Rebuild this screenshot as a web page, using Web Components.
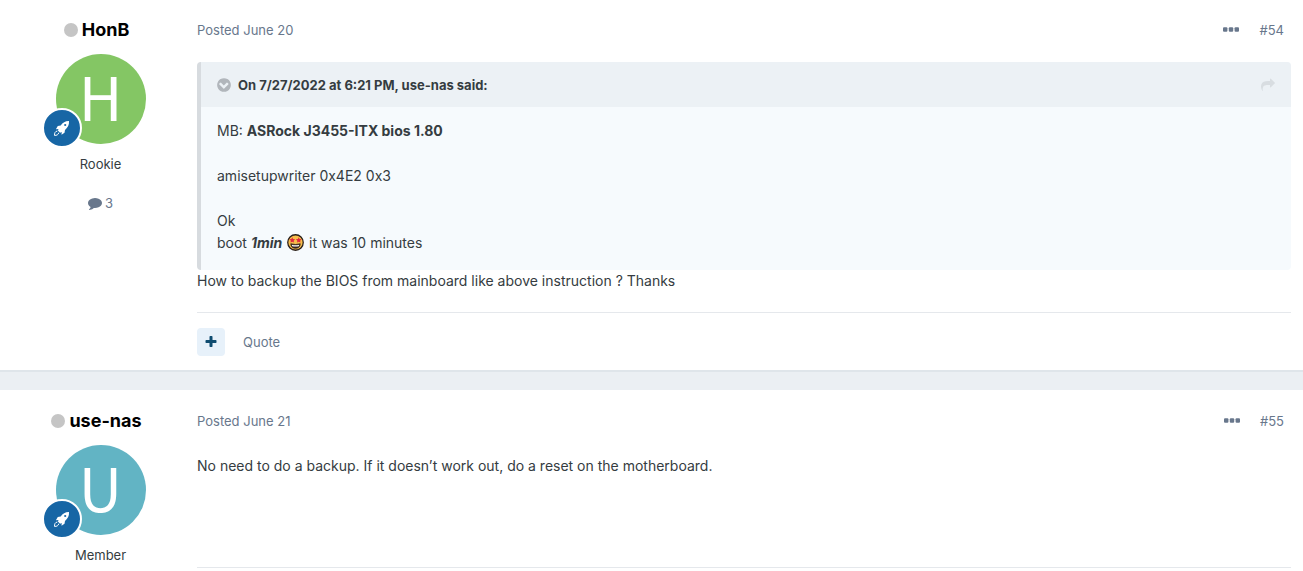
<!DOCTYPE html>
<html lang="en">
<head>
<meta charset="utf-8">
<meta name="viewport" content="width=device-width, initial-scale=1">
<title>Topic replies</title>
<style>
body { margin: 0; background: #ebeff3; color: #353c41; font: 14px/22px Inter, "Liberation Sans", sans-serif; }
</style>
</head>
<body>
<topic-feed>
  <forum-post number="54" posted="June 20" actions>
    <author-panel slot="author" name="HonB" rank="Rookie" posts="3" color="#84c664"></author-panel>
    <quote-block cite="On 7/27/2022 at 6:21 PM, use-nas said:">
      <p>MB: <strong>ASRock J3455-ITX bios 1.80</strong></p>
      <p>amisetupwriter 0x4E2 0x3</p>
      <p>Ok<br>boot <strong><em>1min</em></strong> <star-emoji></star-emoji> it was 10 minutes</p>
    </quote-block>
    <div>How to backup the BIOS from mainboard like above instruction ? Thanks</div>
  </forum-post>
  <forum-post number="55" posted="June 21">
    <author-panel slot="author" name="use-nas" rank="Member" color="#62b4c4"></author-panel>
    <div>No need to do a backup. If it doesn’t work out, do a reset on the motherboard.</div>
  </forum-post>
</topic-feed>

<script>
const ICONS = {
  comment: '<path d="M1792 896q0 174-120 321.5t-326 233-450 85.5q-70 0-145-8-198 175-460 242-49 14-114 22-17 2-30.5-9t-17.5-29v-1q-3-4-.5-12t2-10 4.5-9.5l6-9 7-8.5 8-9q7-8 31-34.5t34.5-38 31-39.5 32.5-51 27-59 26-76q-157-89-247.5-220t-90.5-281q0-130 71-248.5t191-204.5 286-136.5 348-50.5q244 0 450 85.5t326 233 120 321.5z"/>',
  share: '<path d="M1792 640q0 26-19 45l-512 512q-19 19-45 19t-45-19-19-45v-256h-224q-98 0-175.5 6t-154 21.5-133 42.5-105.5 69.5-80 101-48.5 138.5-17.5 181q0 55 5 123 0 6 2.5 23.5t2.5 26.5q0 15-8.5 25t-23.5 10q-16 0-28-17-7-9-13-22t-13.5-30-10.5-24q-127-285-127-451 0-199 53-333 162-403 875-403h224v-256q0-26 19-45t45-19 45 19l512 512q19 19 19 45z"/>',
  chevron: '<path d="M922 1283l454-454q19-19 19-45t-19-45l-102-102q-19-19-45-19t-45 19l-307 307-307-307q-19-19-45-19t-45 19l-102 102q-19 19-19 45t19 45l454 454q19 19 45 19t45-19zm742-387q0 209-103 385.5t-279.5 279.5-385.5 103-385.5-103-279.5-279.5-103-385.5 103-385.5 279.5-279.5 385.5-103 385.5 103 279.5 279.5 103 385.5z"/>',
  plus: '<path d="M1600 736v192q0 40-28 68t-68 28h-416v416q0 40-28 68t-68 28h-192q-40 0-68-28t-28-68v-416h-416q-40 0-68-28t-28-68v-192q0-40 28-68t68-28h416v-416q0-40 28-68t68-28h192q40 0 68 28t28 68v416h416q40 0 68 28t28 68z"/>',
  dots: '<rect x="0" y="590" width="496" height="496" rx="120"/><rect x="648" y="590" width="496" height="496" rx="120"/><rect x="1296" y="590" width="496" height="496" rx="120"/>'
};

class FaIcon extends HTMLElement {
  constructor() { super(); this.attachShadow({ mode: 'open' }); }
  connectedCallback() {
    this.shadowRoot.innerHTML = `
      <style>
        :host { display: inline-block; width: var(--icon-size, 14px); height: var(--icon-size, 14px); }
        svg { display: block; width: 100%; height: 100%; fill: currentColor; }
      </style>
      <svg viewBox="0 0 1792 1792" aria-hidden="true">${ICONS[this.getAttribute('name')]}</svg>`;
  }
}

class StarEmoji extends HTMLElement {
  constructor() {
    super();
    this.attachShadow({ mode: 'open' }).innerHTML = `
      <style>
        :host { display: inline-block; width: 17px; height: 17px; margin: 0 1px; vertical-align: -3px; }
        svg { display: block; width: 100%; height: 100%; }
      </style>
      <svg viewBox="0 0 34 34" role="img" aria-label="Star-struck face">
        <circle cx="17" cy="17" r="15.500" fill="#f8bd4b" stroke="#2b211c" stroke-width="2.600"/>
        <g fill="#e0293d">
          <path d="M10.500 6.500l1.700 3.600 4 .5-2.900 2.700.7 3.900-3.500-1.900-3.500 1.900.7-3.900-3-2.700 4-.5z"/>
          <path d="M23.500 6.500l1.700 3.600 4 .5-2.900 2.700.7 3.900-3.500-1.900-3.500 1.900.7-3.900-3-2.700 4-.5z"/>
        </g>
        <path d="M7.500 19.500q9.500 3 19 0-.8 9-9.500 9t-9.500-9z" fill="#3b2520" stroke="#2b211c" stroke-width="1.500"/>
        <path d="M9.500 21.500q7.500 2 15 0l-1 2.800q-6.500 1.400-13 0z" fill="#fff"/>
      </svg>`;
  }
}

class AuthorPanel extends HTMLElement {
  constructor() { super(); this.attachShadow({ mode: 'open' }); }
  connectedCallback() {
    const name = this.getAttribute('name');
    const posts = this.getAttribute('posts');
    this.shadowRoot.innerHTML = `
      <style>
        :host { display: flex; flex-direction: column; align-items: center; font-size: 13px; line-height: 20px; }
        h3 { display: flex; align-items: center; gap: 4px; margin: 0 0 12px; padding-right: 8px; font-size: 18px; line-height: 24px; font-weight: 700; color: #000; }
        a { color: inherit; text-decoration: none; }
        .status { width: 14px; height: 14px; border-radius: 50%; background: #c5c5c5; }
        .avatar { position: relative; width: 90px; height: 90px; margin-bottom: 10px; }
        .letter { display: block; height: 90px; border-radius: 50%; color: #fff; font: 400 60px/82px "Noto Sans CJK SC", sans-serif; text-align: center; }
        .badge { position: absolute; left: -14px; bottom: -4px; width: 36px; height: 36px; border: 2px solid #fff; border-radius: 50%; background: #1766a5; }
        .badge svg { display: block; width: 36px; height: 36px; }
        .posts { display: flex; align-items: center; gap: 3px; margin-top: 19px; color: #68778c; }
      </style>
      <h3><span class="status"></span><a href="#">${name}</a></h3>
      <div class="avatar">
        <a class="letter" href="#" style="background:${this.getAttribute('color')}">${name[0].toUpperCase()}</a>
        <span class="badge">
          <svg viewBox="0 0 36 36" role="img" aria-label="Rank badge">
            <path d="M25 11c-3.500-.1-6.300 1.400-8.300 4.600l-2.900.5-1.900 3.100 2.600-.3-.6 1.600 2.200 2.200 1.600-.6-.2 2.700 3-2 .5-2.900c2.800-2.200 4.300-5.200 4-8.900z" fill="#fff"/>
            <circle cx="21.200" cy="15" r="1.100" fill="#1766a5"/>
            <path d="M13.400 21c-2.300.2-3 2.300-2.900 4.400 2 .1 4-.6 4.200-2.700" fill="none" stroke="#fff" stroke-width="1"/>
          </svg>
        </span>
      </div>
      <div>${this.getAttribute('rank')}</div>
      ${posts ? `<div class="posts"><fa-icon name="comment"></fa-icon>${posts}</div>` : ''}`;
  }
}

class QuoteBlock extends HTMLElement {
  constructor() { super(); this.attachShadow({ mode: 'open' }); }
  connectedCallback() {
    this.shadowRoot.innerHTML = `
      <style>
        :host { display: block; border-left: 4px solid #d7dbdf; border-radius: 4px; overflow: hidden; background: #f6fafd; }
        header { display: flex; align-items: center; justify-content: space-between; height: 45px; padding: 0 16px 0 15px; background: #ecf1f5; font-size: 13px; font-weight: 700; }
        button { display: flex; align-items: center; gap: 6px; padding: 0; border: 0; background: none; font: inherit; color: inherit; }
        button fa-icon { --icon-size: 16px; color: #b1b6bb; }
        a { display: flex; color: #d8dde1; }
        .body { display: grid; gap: 23px; padding: 13px 16px 16px; }
        ::slotted(p) { margin: 0; }
      </style>
      <header>
        <button type="button"><fa-icon name="chevron"></fa-icon><span>${this.getAttribute('cite')}</span></button>
        <a href="#" aria-label="View original post"><fa-icon name="share"></fa-icon></a>
      </header>
      <div class="body"><slot></slot></div>`;
  }
}

class ForumPost extends HTMLElement {
  constructor() { super(); this.attachShadow({ mode: 'open' }); }
  connectedCallback() {
    this.shadowRoot.innerHTML = `
      <style>
        :host { display: grid; grid-template-columns: 177px minmax(0, 1fr); gap: 8px; padding: 18px 12px 14px; background: #fff; box-shadow: 0 2px 0 #dfe5ea; }
        :host(:last-child) { padding-top: 19px; padding-bottom: 0; }
        .meta { display: flex; align-items: center; gap: 20px; padding-right: 7px; margin-bottom: 20px; font-size: 13px; line-height: 24px; color: #68778c; }
        .meta a { color: inherit; text-decoration: none; }
        .posted { margin-right: auto; }
        button { display: grid; place-items: center; padding: 0; border: 0; background: none; color: inherit; font: inherit; }
        .menu { --icon-size: 16px; }
        .content { min-height: 94px; padding-bottom: 20px; }
        ::slotted(div:only-of-type:nth-child(2)) { padding-top: 2px; }
        footer { border-top: 1px solid #e5e8ec; }
        .actions { display: flex; align-items: center; gap: 18px; padding-top: 15px; font-size: 13px; color: #68778c; }
        .actions a { color: inherit; text-decoration: none; }
        .multi { width: 28px; height: 28px; border-radius: 4px; background: #e7f1fa; color: #0f4c70; }
      </style>
      <slot name="author"></slot>
      <article>
        <div class="meta">
          <a class="posted" href="#">Posted <time>${this.getAttribute('posted')}</time></a>
          <button class="menu" type="button" aria-label="More options"><fa-icon name="dots"></fa-icon></button>
          <a href="#">#${this.getAttribute('number')}</a>
        </div>
        <div class="content"><slot></slot></div>
        <footer>${this.hasAttribute('actions') ? `
          <div class="actions">
            <button class="multi" type="button" aria-label="Multi-quote"><fa-icon name="plus"></fa-icon></button>
            <a href="#">Quote</a>
          </div>` : ''}
        </footer>
      </article>`;
  }
}

class TopicFeed extends HTMLElement {
  constructor() {
    super();
    this.attachShadow({ mode: 'open' }).innerHTML = `
      <style>
        :host { display: grid; grid-template-rows: auto 1fr; gap: 20px; min-height: 100vh; }
      </style>
      <slot></slot>`;
  }
}

customElements.define('fa-icon', FaIcon);
customElements.define('star-emoji', StarEmoji);
customElements.define('author-panel', AuthorPanel);
customElements.define('quote-block', QuoteBlock);
customElements.define('forum-post', ForumPost);
customElements.define('topic-feed', TopicFeed);
</script>
</body>
</html>
